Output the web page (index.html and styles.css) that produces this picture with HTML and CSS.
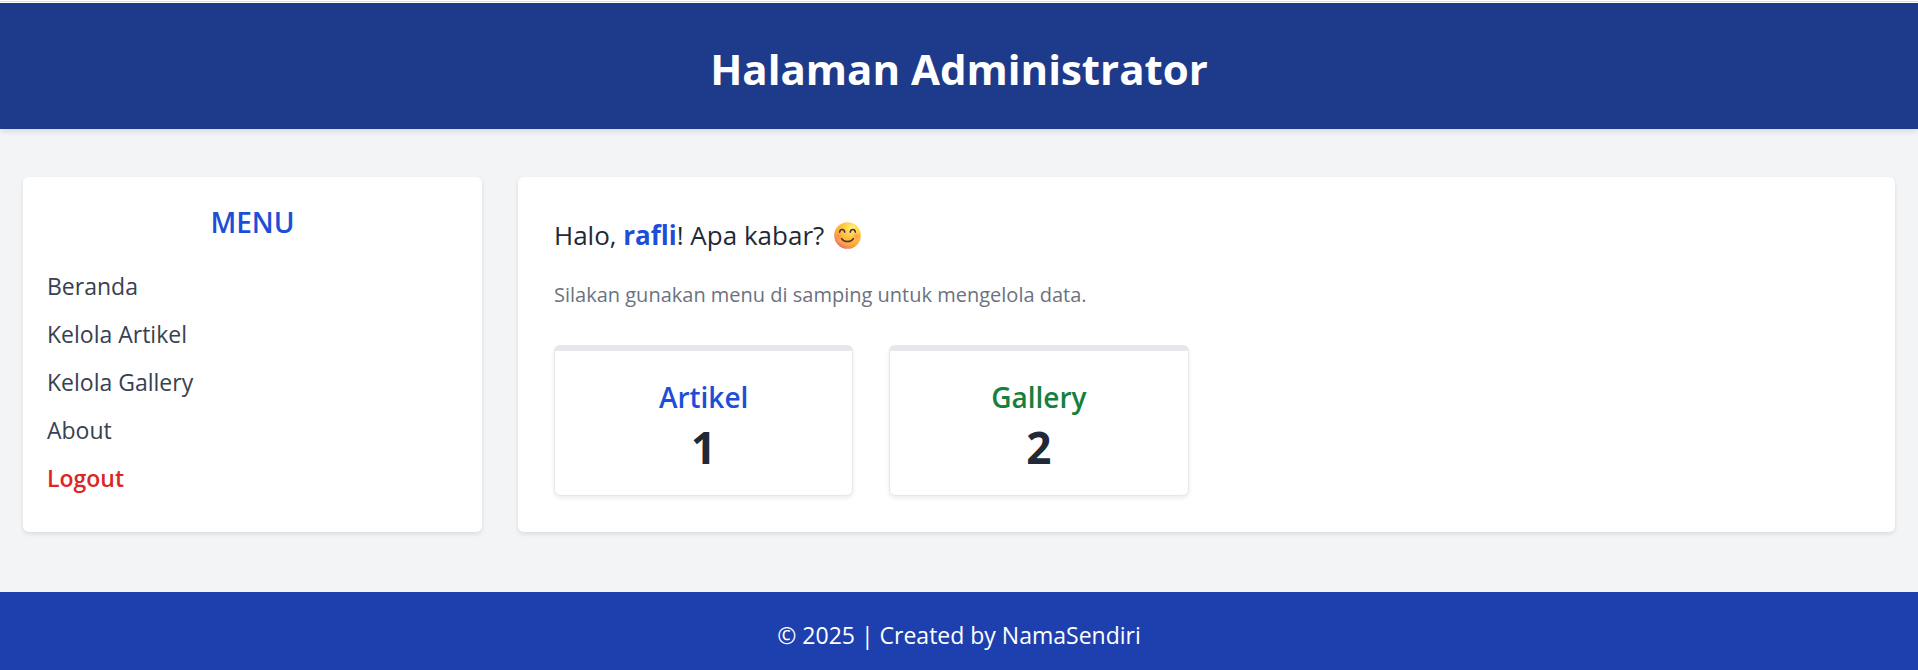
FILE: index.html
```html
<!DOCTYPE html>
<html lang="id">
<head>
<meta charset="utf-8">
<meta name="viewport" content="width=device-width, initial-scale=1">
<title>Halaman Administrator</title>
<link rel="stylesheet" href="styles.css">
</head>
<body>
<header class="header"><h1 class="header-title">Halaman Administrator</h1></header>
<div class="layout">
  <aside class="card sidebar">
    <h2 class="menu-title">MENU</h2>
    <nav>
      <ul class="menu">
        <li><a href="#">Beranda</a></li>
        <li><a href="#">Kelola Artikel</a></li>
        <li><a href="#">Kelola Gallery</a></li>
        <li><a href="#">About</a></li>
        <li><a class="logout" href="#">Logout</a></li>
      </ul>
    </nav>
  </aside>
  <main class="card content">
    <p class="greeting">Halo, <strong class="user">rafli</strong>! Apa kabar?
      <svg class="smile" viewBox="0 0 27 27" role="img" aria-label="Senyum">
        <defs>
          <radialGradient id="face" cx="0.68" cy="0.22" r="0.85">
            <stop offset="0" stop-color="#fff478"/>
            <stop offset="0.4" stop-color="#ffc83f"/>
            <stop offset="0.78" stop-color="#fca63a"/>
            <stop offset="1" stop-color="#e8687a"/>
          </radialGradient>
          <radialGradient id="blush">
            <stop offset="0" stop-color="#ff7a55" stop-opacity="0.6"/>
            <stop offset="1" stop-color="#ff7a55" stop-opacity="0"/>
          </radialGradient>
        </defs>
        <circle cx="13.5" cy="13.5" r="13.3" fill="url(#face)"/>
        <circle cx="4.5" cy="14" r="4" fill="url(#blush)"/>
        <circle cx="22.5" cy="14" r="4" fill="url(#blush)"/>
        <g fill="none" stroke="#4d2b4f" stroke-width="1.5" stroke-linecap="round">
          <path d="M5.6 10.2C6 6.6 10.2 6.6 10.8 10.2"/>
          <path d="M16.2 10.2C16.8 6.6 21 6.6 21.4 10.2"/>
          <path d="M7.6 16.6C10.2 20.6 16.8 20.6 19.4 16.6"/>
        </g>
      </svg>
    </p>
    <p class="hint">Silakan gunakan menu di samping untuk mengelola data.</p>
    <div class="stats">
      <section class="stat">
        <h3 class="stat-title">Artikel</h3>
        <p class="stat-value">1</p>
      </section>
      <section class="stat">
        <h3 class="stat-title green">Gallery</h3>
        <p class="stat-value">2</p>
      </section>
    </div>
  </main>
</div>
<footer class="footer">© 2025 | Created by NamaSendiri</footer>
</body>
</html>
```

FILE: styles.css
```css
* { box-sizing: border-box; margin: 0; padding: 0; }

body {
  min-height: 100vh;
  display: flex;
  flex-direction: column;
  border-top: 1px solid #fff;
  background: #f3f4f6;
  color: #1f2937;
  font-family: "Open Sans", "Noto Sans", sans-serif;
  font-size: 23px;
  line-height: 36px;
}

.header {
  border-top: 1px solid #dcdcdc;
  box-shadow: 0 2px 6px rgba(0, 0, 0, 0.12);
  text-align: center;
}

.header-title {
  padding: 36px 24px 30px;
  border-top: 1px solid #fff;
  background: #1e3a8a;
  color: #fff;
  font-size: 42px;
  font-weight: 700;
  line-height: 60px;
}

.layout {
  display: grid;
  grid-template-columns: 1fr 3fr;
  gap: 36px;
  padding: 48px 23px 60px;
}

.card {
  border-radius: 6px;
  background: #fff;
  box-shadow: 0 2px 4px rgba(0, 0, 0, 0.1);
}

.sidebar { padding: 24px; }

.menu-title {
  margin-bottom: 24px;
  color: #1d4ed8;
  font-size: 28px;
  font-weight: 600;
  line-height: 43px;
  text-align: center;
}

.menu { display: grid; gap: 12px; list-style: none; }
.menu a { color: #374151; text-decoration: none; }
.menu .logout { color: #dc2626; font-weight: 600; }

.content { padding: 36px; }

.greeting { margin-bottom: 22px; font-size: 26px; line-height: 44px; }
.user { color: #1d4ed8; font-weight: 700; }
.smile { width: 27px; height: 27px; margin-left: 3px; vertical-align: -4px; }

.hint { margin-bottom: 34px; color: #6b7280; font-size: 20px; line-height: 32px; }

.stats { display: grid; grid-template-columns: repeat(4, 1fr); gap: 36px; }

.stat {
  padding: 24px 24px 20px;
  border: 1px solid #e5e7eb;
  border-top-width: 6px;
  border-radius: 6px;
  box-shadow: 0 2px 4px rgba(0, 0, 0, 0.08);
  text-align: center;
}

.stat-title { color: #1d4ed8; font-size: 28px; font-weight: 600; line-height: 44px; }
.stat-title.green { color: #15803d; }
.stat-value { font-size: 44px; font-weight: 700; line-height: 56px; }

.footer {
  flex: 1;
  padding: 24px 24px 16px;
  background: #1e40af;
  color: #fff;
  line-height: 38px;
  text-align: center;
}
```
